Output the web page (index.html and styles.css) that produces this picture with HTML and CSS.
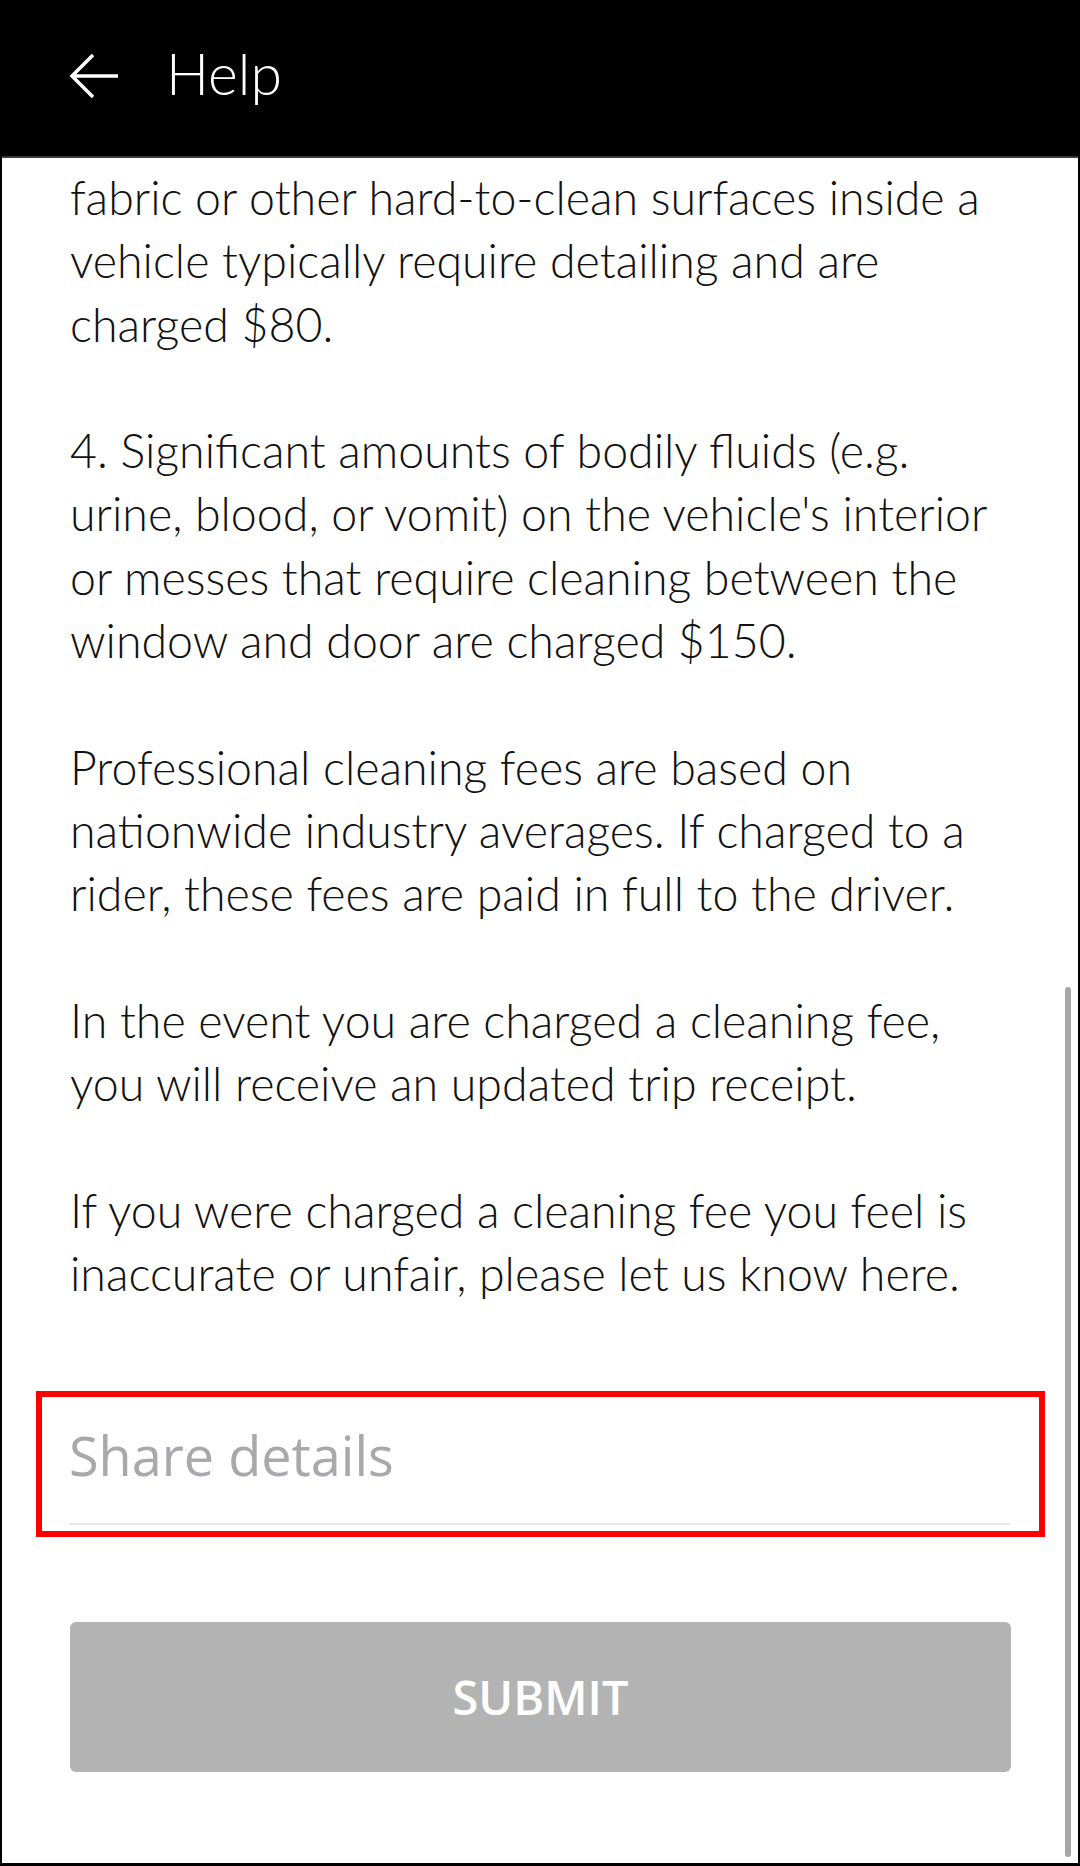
FILE: index.html
```html
<!DOCTYPE html>
<html>
<head>
<meta charset="utf-8">
<link rel="stylesheet" href="styles.css">
</head>
<body>
<div class="frame">
  <header class="topbar">
    <svg class="back" width="50" height="46" viewBox="0 0 50 46">
      <path d="M24 2 L3 23 L24 44 M3 23 H49" fill="none" stroke="#fff" stroke-width="3.5" stroke-linecap="butt" stroke-linejoin="miter"/>
    </svg>
    <h1 class="title">Help</h1>
  </header>
  <main class="content">
    <p class="para">fabric or other hard-to-clean surfaces inside a<br>vehicle typically require detailing and are<br>charged $80.</p>
    <p class="para">4. Significant amounts of bodily fluids (e.g.<br>urine, blood, or vomit) on the vehicle's interior<br>or messes that require cleaning between the<br>window and door are charged $150.</p>
    <p class="para">Professional cleaning fees are based on<br>nationwide industry averages. If charged to a<br>rider, these fees are paid in full to the driver.</p>
    <p class="para">In the event you are charged a cleaning fee,<br>you will receive an updated trip receipt.</p>
    <p class="para last">If you were charged a cleaning fee you feel is<br>inaccurate or unfair, please let us know here.</p>
    <div class="highlight">
      <div class="field">
        <div class="placeholder">Share details</div>
        <div class="underline"></div>
      </div>
    </div>
    <button class="submit">SUBMIT</button>
  </main>
  <div class="scrollbar"></div>
</div>
</body>
</html>
```
FILE: styles.css
```css
html, body {
  margin: 0;
  padding: 0;
  background: #fff;
}
.frame {
  position: relative;
  width: 1080px;
  height: 1866px;
  box-sizing: border-box;
  border-left: 2px solid #000;
  border-right: 2px solid #000;
  border-bottom: 3px solid #000;
  overflow: hidden;
  display: flex;
  flex-direction: column;
  font-family: "Lato", "Liberation Sans", sans-serif;
}
.topbar {
  height: 156px;
  background: #000;
  border-bottom: 2px solid #3a3a3a;
  display: flex;
  align-items: center;
  padding-left: 67px;
  flex-shrink: 0;
}
.back {
  display: block;
  margin-top: -4px;
}
.title {
  margin: -10px 0 0 47px;
  color: #fff;
  font-weight: 300;
  font-size: 57px;
  line-height: 64px;
}
.content {
  padding: 8px 67px 0 68px;
  display: flex;
  flex-direction: column;
}
.para {
  margin: 0 0 63.3px 0;
  font-size: 46.5px;
  line-height: 63.3px;
  font-weight: 300;
  color: #111;
  white-space: nowrap;
}
.para.last {
  margin-bottom: 86px;
}
.highlight {
  margin: 0 -34px 0 -34px;
  border: 6px solid #ff0000;
  padding: 18px 29px 6px 27px;
}
.placeholder {
  font-family: "Open Sans", "Liberation Sans", sans-serif;
  font-size: 54px;
  line-height: 80px;
  color: #a8a8ad;
  font-weight: 400;
}
.underline {
  margin-top: 28px;
  height: 2px;
  background: #e8e8e8;
}
.submit {
  margin-top: 85px;
  height: 150px;
  border: none;
  border-radius: 6px;
  background: #b3b3b3;
  color: #fff;
  font-family: "Open Sans", "Liberation Sans", sans-serif;
  font-weight: 600;
  font-size: 47px;
  padding: 0;
}
.scrollbar {
  position: absolute;
  left: 1063px;
  top: 987px;
  width: 6px;
  height: 870px;
  border-radius: 3px;
  background: #a6a6a6;
}
```
